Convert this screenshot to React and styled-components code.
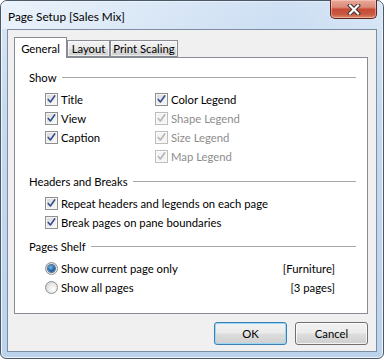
import React from "react";
import styled, { createGlobalStyle } from "styled-components";

const GlobalStyle = createGlobalStyle`
  html, body {
    margin: 0;
    padding: 0;
    background: #ffffff;
  }
  body {
    font-family: Lato, "Liberation Sans", sans-serif;
    font-size: 11.3px;
    color: #000;
  }
`;

const Window = styled.div`
  width: 384px;
  height: 359px;
  box-sizing: border-box;
  border: 1px solid #4a5868;
  border-radius: 7px 7px 6px 6px;
  background: linear-gradient(180deg, #dbe8f6 0%, #c6daf0 30%, #bcd3ed 100%);
  box-shadow: inset 0 0 0 1px rgba(255, 255, 255, 0.75);
  display: flex;
  flex-direction: column;
`;

const TitleBar = styled.div`
  height: 28px;
  display: flex;
  align-items: flex-start;
  justify-content: space-between;
  background: linear-gradient(90deg, rgba(236, 243, 251, 0.9) 0%, rgba(220, 233, 247, 0.4) 40%, rgba(180, 207, 238, 0.3) 75%, rgba(215, 230, 246, 0.6) 100%);
  border-radius: 6px 6px 0 0;
`;

const Caption = styled.div`
  padding: 8px 0 0 7px;
  line-height: 15px;
  font-size: 11.8px;
  color: #000;
`;

const CloseButton = styled.div`
  width: 47px;
  height: 19px;
  box-sizing: border-box;
  margin: -1px 6px 0 0;
  border: 1px solid #5b2620;
  border-top: none;
  border-radius: 0 0 5px 5px;
  background: linear-gradient(180deg, #e9a99a 0%, #dc8a78 40%, #c64a36 52%, #c95a43 80%, #dd8c6c 100%);
  box-shadow: inset 0 0 0 1px rgba(255, 220, 210, 0.45);
  display: flex;
  align-items: center;
  justify-content: center;
`;

const Client = styled.div`
  flex: 1;
  margin: 0 6px 6px 6px;
  border: 1px solid #7d8ea3;
  background: #f0f0f0;
  padding: 7px 8px 6px 6px;
  display: flex;
  flex-direction: column;
`;

const TabStrip = styled.div`
  height: 20px;
  display: flex;
  align-items: flex-end;
  position: relative;
  z-index: 1;
`;

const Tab = styled.div`
  box-sizing: border-box;
  width: ${(p) => p.$width}px;
  height: ${(p) => (p.$active ? "21px" : "17px")};
  margin-bottom: ${(p) => (p.$active ? "-1px" : "0")};
  padding-top: ${(p) => (p.$active ? "1px" : "0")};
  border: 1px solid #898c95;
  border-bottom: ${(p) => (p.$active ? "none" : "1px solid #898c95")};
  background: ${(p) =>
    p.$active ? "#ffffff" : "linear-gradient(180deg, #f2f2f2 0%, #ebebeb 50%, #dddddd 51%, #cfcfcf 100%)"};
  box-shadow: ${(p) => (p.$active ? "none" : "inset 0 0 0 1px rgba(255,255,255,0.6)")};
  display: flex;
  align-items: center;
  justify-content: center;
  line-height: 15px;
  white-space: nowrap;
`;

const Panel = styled.div`
  height: 257px;
  box-sizing: border-box;
  border: 1px solid #898c95;
  background: #ffffff;
  padding: 10px 11px 0 14px;
  display: flex;
  flex-direction: column;
`;

const Section = styled.div`
  margin-top: ${(p) => p.$spaceBefore || 0}px;
  display: flex;
  flex-direction: column;
`;

const SectionHeader = styled.div`
  height: 18px;
  display: flex;
  align-items: center;
  gap: 5px;
  line-height: 15px;

  &::after {
    content: "";
    flex: 1;
    height: 1px;
    background: #a7a7a7;
  }
`;

const Options = styled.div`
  margin: 4px 0 0 16px;
  display: flex;
  flex-direction: ${(p) => (p.$columns ? "row" : "column")};
`;

const Column = styled.div`
  width: ${(p) => p.$width || "auto"};
  display: flex;
  flex-direction: column;
`;

const Row = styled.div`
  height: 19px;
  display: flex;
  align-items: center;
  gap: 3px;
  line-height: 15px;
  color: ${(p) => (p.$disabled ? "#8d8d8d" : "#000")};
  white-space: nowrap;
`;

const ShelfRow = styled.div`
  height: 19px;
  display: flex;
  align-items: center;
  justify-content: space-between;
  padding-right: 21px;
  line-height: 15px;
`;

const Box = styled.span`
  width: 13px;
  height: 13px;
  box-sizing: border-box;
  flex: none;
  border: 1px solid ${(p) => (p.$disabled ? "#bdbdbd" : "#8e8f8f")};
  background: ${(p) =>
    p.$disabled ? "#f4f4f4" : "linear-gradient(135deg, #d2d4d7 0%, #eeeeef 60%, #fbfbfb 100%)"};
  box-shadow: inset 0 0 0 1px ${(p) => (p.$disabled ? "#fbfbfb" : "#f6f6f6")};
  display: flex;
  align-items: center;
  justify-content: center;
`;

const RadioDot = styled.span`
  width: 13px;
  height: 13px;
  box-sizing: border-box;
  flex: none;
  border-radius: 50%;
  border: 1px solid #8e8f8f;
  background: radial-gradient(circle at 65% 65%, #ffffff 0%, #e4e4e4 55%, #c9c9c9 100%);
  display: flex;
  align-items: center;
  justify-content: center;

  &::after {
    content: "";
    display: ${(p) => (p.$checked ? "block" : "none")};
    width: 7px;
    height: 7px;
    border-radius: 50%;
    background: radial-gradient(circle at 40% 35%, #7fc3ee 0%, #2a6eb5 45%, #0e3d74 100%);
    box-shadow: 0 0 0 1px #56708f;
  }
`;

const ShelfLabel = styled.div`
  display: flex;
  align-items: center;
  gap: 3px;
`;

const ButtonRow = styled.div`
  margin-top: 8px;
  display: flex;
  justify-content: flex-end;
  gap: 8px;
`;

const Button = styled.div`
  width: 73px;
  height: 23px;
  box-sizing: border-box;
  border: 1px solid ${(p) => (p.$default ? "#3c7fb1" : "#707070")};
  border-radius: 3px;
  background: linear-gradient(180deg, #f2f2f2 0%, #ebebeb 48%, #dddddd 52%, #cfcfcf 100%);
  box-shadow: inset 0 0 0 1px ${(p) => (p.$default ? "#98d8f8" : "rgba(255,255,255,0.75)")};
  display: flex;
  align-items: center;
  justify-content: center;
  line-height: 15px;
`;

const Check = ({ disabled }) => (
  <Box $disabled={disabled}>
    <svg width="11" height="11" viewBox="0 0 11 11">
      <path
        d="M2.2 5.4 L4.4 8 L8.8 1.8"
        fill="none"
        stroke={disabled ? "#b4b4b4" : "#34498c"}
        strokeWidth="1.5"
        strokeLinecap="round"
        strokeLinejoin="round"
      />
    </svg>
  </Box>
);

const CheckRow = ({ label, disabled }) => (
  <Row $disabled={disabled}>
    <Check disabled={disabled} />
    <span>{label}</span>
  </Row>
);

const App = () => {
  return (
    <>
      <GlobalStyle />
      <Window>
        <TitleBar>
          <Caption>Page Setup [Sales Mix]</Caption>
          <CloseButton>
            <svg width="16" height="11" viewBox="0 0 16 11">
              <path d="M4 1.5 L12 9.5 M12 1.5 L4 9.5" stroke="#3a2a2a" strokeWidth="4" strokeLinecap="square" />
              <path d="M4 1.5 L12 9.5 M12 1.5 L4 9.5" stroke="#ffffff" strokeWidth="2.2" strokeLinecap="square" />
            </svg>
          </CloseButton>
        </TitleBar>
        <Client>
          <TabStrip>
            <Tab $active $width={53}>General</Tab>
            <Tab $width={43}>Layout</Tab>
            <Tab $width={68}>Print Scaling</Tab>
          </TabStrip>
          <Panel>
            <Section>
              <SectionHeader>Show</SectionHeader>
              <Options $columns>
                <Column $width="110px">
                  <CheckRow label="Title" />
                  <CheckRow label="View" />
                  <CheckRow label="Caption" />
                </Column>
                <Column>
                  <CheckRow label="Color Legend" />
                  <CheckRow label="Shape Legend" disabled />
                  <CheckRow label="Size Legend" disabled />
                  <CheckRow label="Map Legend" disabled />
                </Column>
              </Options>
            </Section>
            <Section $spaceBefore={6}>
              <SectionHeader>Headers and Breaks</SectionHeader>
              <Options>
                <CheckRow label="Repeat headers and legends on each page" />
                <CheckRow label="Break pages on pane boundaries" />
              </Options>
            </Section>
            <Section $spaceBefore={5}>
              <SectionHeader>Pages Shelf</SectionHeader>
              <Options>
                <ShelfRow>
                  <ShelfLabel>
                    <RadioDot $checked />
                    <span>Show current page only</span>
                  </ShelfLabel>
                  <span>[Furniture]</span>
                </ShelfRow>
                <ShelfRow>
                  <ShelfLabel>
                    <RadioDot />
                    <span>Show all pages</span>
                  </ShelfLabel>
                  <span>[3 pages]</span>
                </ShelfRow>
              </Options>
            </Section>
          </Panel>
          <ButtonRow>
            <Button $default>OK</Button>
            <Button>Cancel</Button>
          </ButtonRow>
        </Client>
      </Window>
    </>
  );
};

export default App;
